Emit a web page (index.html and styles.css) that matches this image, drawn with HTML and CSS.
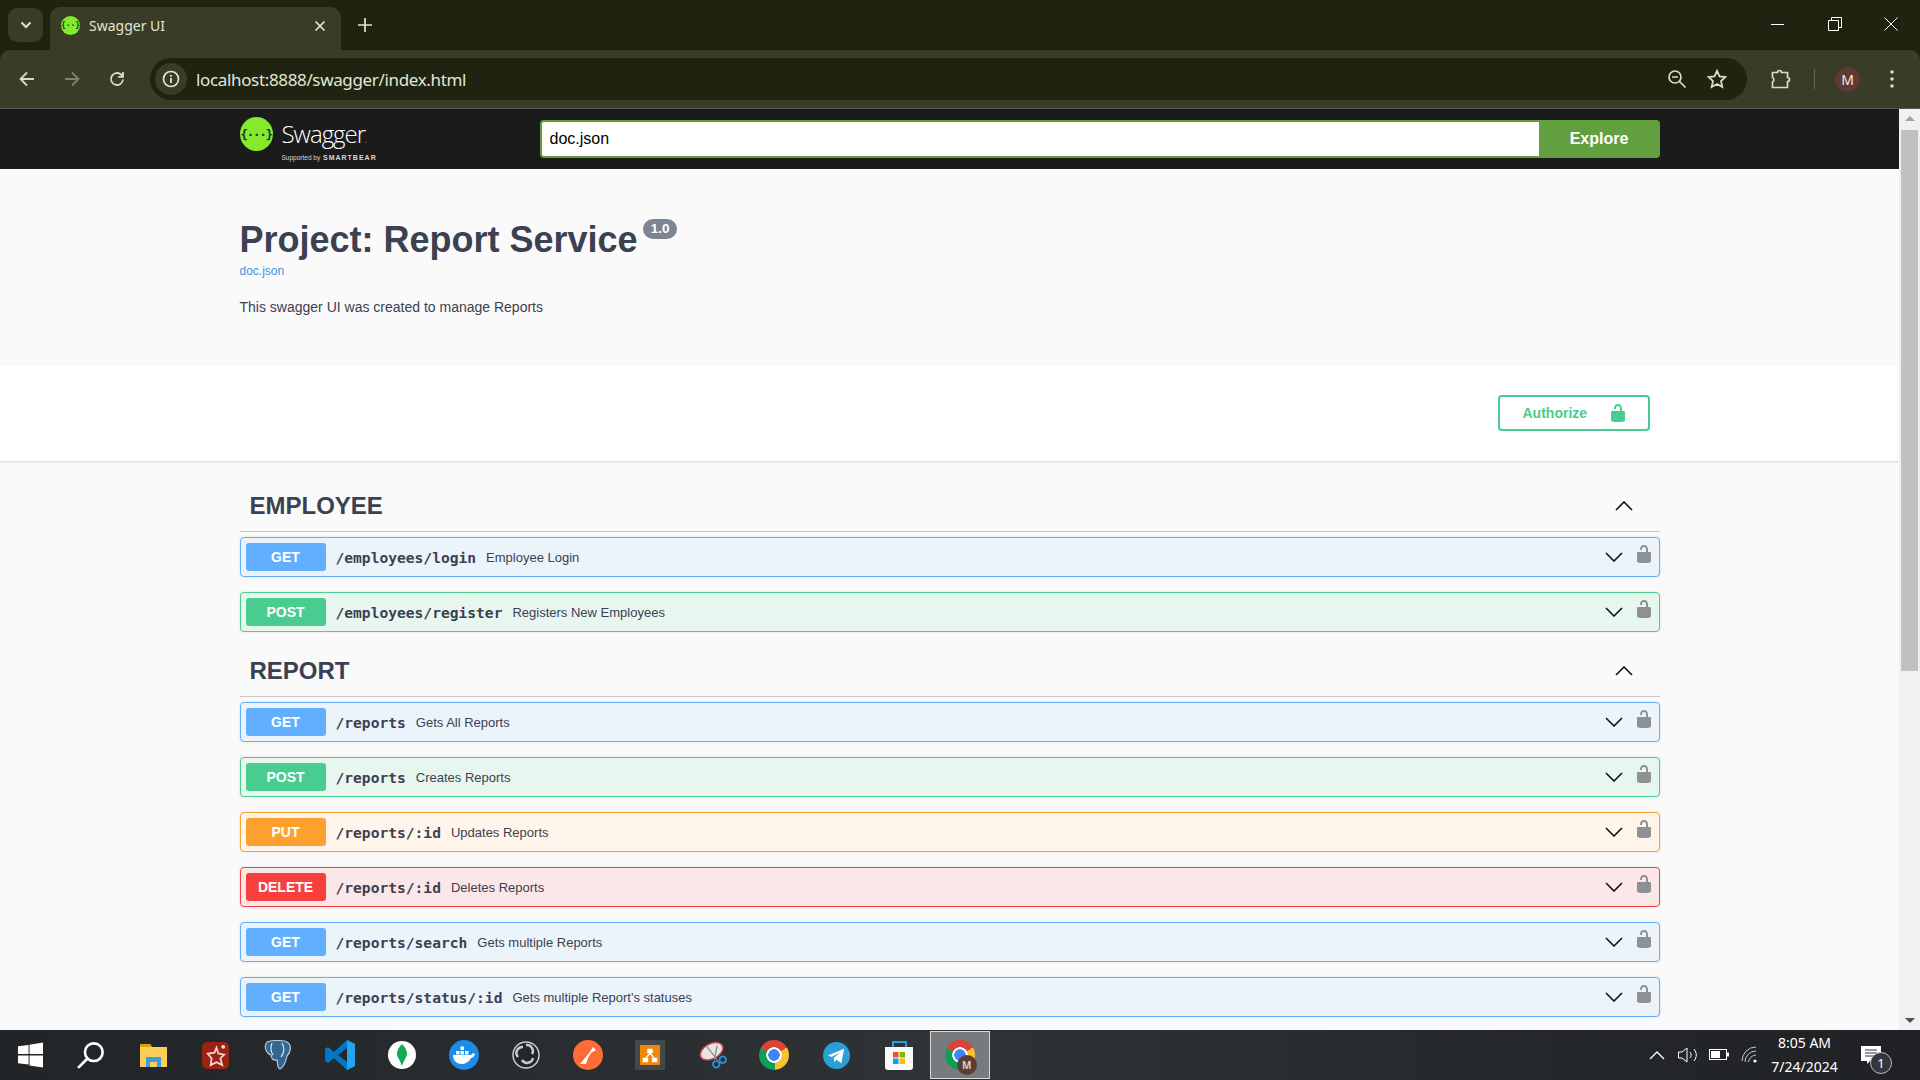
FILE: index.html
```html
<!doctype html>
<html>
<head>
    <meta charset="utf-8">
    <title>Swagger UI</title>
    <link rel="stylesheet" href="styles.css">
</head>
<body>
<svg class="defs">
    <symbol id="lock" viewBox="0 0 20 20"><path d="M15.8 8H14V5.6C14 2.703 12.665 1 10 1 7.334 1 6 2.703 6 5.6V6h2v-.801C8 3.754 8.797 3 10 3c1.203 0 2 .754 2 2.199V8H4c-.553 0-1 .646-1 1.199V17c0 .549.428 1.139.951 1.307l1.197.387C5.672 18.861 6.55 19 7.1 19h5.8c.549 0 1.428-.139 1.951-.307l1.196-.387c.524-.167.953-.757.953-1.306V9.199C17 8.646 16.352 8 15.8 8z"/></symbol>
    <symbol id="down" viewBox="0 0 18 10"><path d="M1 1l8 8 8-8" fill="none" stroke="#111" stroke-width="1.6"/></symbol>
    <symbol id="up" viewBox="0 0 18 10"><path d="M1 9l8-8 8 8" fill="none" stroke="#111" stroke-width="1.6"/></symbol>
</svg>

<div class="tabstrip">
    <div class="tabsearch"><svg width="12" height="8" viewBox="0 0 12 8"><path d="M1.5 1.5L6 6l4.500-4.500" fill="none" stroke="#dfe3cf" stroke-width="2"/></svg></div>
    <div class="tab">
        <span class="favicon">{··}</span>
        <span class="tabtitle">Swagger UI</span>
        <svg class="tabclose" width="12" height="12" viewBox="0 0 12 12"><path d="M1.500 1.500l9 9m0-9l-9 9" stroke="#e3e6d5" stroke-width="1.700"/></svg>
    </div>
    <svg class="newtab" width="14" height="14" viewBox="0 0 14 14"><path d="M7 0v14M0 7h14" stroke="#e3e6d5" stroke-width="1.700"/></svg>
    <div class="winbtns">
        <svg width="14" height="14" viewBox="0 0 14 14"><path d="M0 7.500h13" stroke="#fff"/></svg>
        <svg width="14" height="14" viewBox="0 0 14 14"><path d="M.5 3.500h10v10H.5zM3.500 3.500V.5h10v10h-3" fill="none" stroke="#fff"/></svg>
        <svg width="14" height="14" viewBox="0 0 14 14"><path d="M.5.5l13 13m0-13l-13 13" stroke="#fff"/></svg>
    </div>
</div>

<div class="toolbar">
    <svg class="navbtn" width="18" height="18" viewBox="0 0 18 18"><path d="M16 9H3m6-6.500L2.500 9 9 15.500" fill="none" stroke="#d9dcc8" stroke-width="1.800"/></svg>
    <svg class="navbtn" width="18" height="18" viewBox="0 0 18 18"><path d="M2 9h13M9 2.500L15.500 9 9 15.500" fill="none" stroke="#7f826d" stroke-width="1.800"/></svg>
    <svg class="navbtn" width="18" height="18" viewBox="0 0 18 18"><path d="M15 9.500A6 6 0 1 1 13 4.500L15 6.500M15 2v4.800h-4.800" fill="none" stroke="#d9dcc8" stroke-width="1.800"/></svg>
    <div class="omnibox">
        <span class="infochip"><svg width="18" height="18" viewBox="0 0 18 18"><circle cx="9" cy="9" r="7.500" fill="none" stroke="#e3e6d5" stroke-width="1.700"/><path d="M9 8v5M9 5v1.800" stroke="#e3e6d5" stroke-width="1.800"/></svg></span>
        <span class="url">localhost:8888/swagger/index.html</span>
        <svg class="omniicon" width="20" height="20" viewBox="0 0 20 20"><circle cx="8" cy="8" r="6" fill="none" stroke="#d9dcc8" stroke-width="1.700"/><path d="M5 8h6M12.500 12.500l6 6" stroke="#d9dcc8" stroke-width="1.700"/></svg>
        <svg class="omniicon" width="20" height="20" viewBox="0 0 20 20"><path d="M10 1.800l2.500 5.500 6 .7-4.500 4 1.300 6L10 15l-5.300 3 1.300-6-4.500-4 6-.7z" fill="none" stroke="#d9dcc8" stroke-width="1.800"/></svg>
    </div>
    <svg class="exticon" width="20" height="20" viewBox="0 0 20 20"><path d="M1.500 3.500h5a2 2 0 0 1 4 0h6v5a2 2 0 0 1 0 4v6h-15v-5.500a2.500 2.500 0 0 0 0-4.500z" fill="none" stroke="#d9dcc8" stroke-width="1.700"/></svg>
    <span class="toolsep"></span>
    <span class="avatar">M</span>
    <svg class="kebab" width="4" height="18" viewBox="0 0 4 18"><circle cx="2" cy="2" r="1.800" fill="#d9dcc8"/><circle cx="2" cy="9" r="1.800" fill="#d9dcc8"/><circle cx="2" cy="16" r="1.800" fill="#d9dcc8"/></svg>
</div>

<div class="viewport">
    <div class="page">
        <div class="topbar">
            <div class="wrap topbar-inner">
                <div class="logo">
                    <span class="logo-mark">{···}</span>
                    <div class="logo-text">
                        <span class="logo-name">Swagger<small>.</small></span>
                        <span class="logo-sub">Supported by <b>SMARTBEAR</b></span>
                    </div>
                </div>
                <form class="explore">
                    <input class="explore-input" type="text" value="doc.json">
                    <span class="explore-btn">Explore</span>
                </form>
            </div>
        </div>

        <div class="wrap info">
            <div class="title-row">
                <h2>Project: Report Service</h2>
                <span class="version">1.0</span>
            </div>
            <a class="doclink">doc.json</a>
            <p class="desc">This swagger UI was created to manage Reports</p>
        </div>

        <div class="scheme">
            <div class="wrap scheme-inner">
                <span class="authorize">Authorize<svg class="authlock" width="20" height="20"><use href="#lock"/></svg></span>
            </div>
        </div>

        <div class="wrap">
            <div class="tag tag-first"><h3>EMPLOYEE</h3><svg width="18" height="10"><use href="#up"/></svg></div>
            <div class="ops">
                <div class="op get"><span class="method">GET</span><span class="path">/employees/login</span><span class="summary">Employee Login</span><svg class="chev" width="18" height="10"><use href="#down"/></svg><svg class="oplock" width="20" height="20"><use href="#lock"/></svg></div>
                <div class="op post"><span class="method">POST</span><span class="path">/employees/register</span><span class="summary">Registers New Employees</span><svg class="chev" width="18" height="10"><use href="#down"/></svg><svg class="oplock" width="20" height="20"><use href="#lock"/></svg></div>
            </div>

            <div class="tag"><h3>REPORT</h3><svg width="18" height="10"><use href="#up"/></svg></div>
            <div class="ops">
                <div class="op get"><span class="method">GET</span><span class="path">/reports</span><span class="summary">Gets All Reports</span><svg class="chev" width="18" height="10"><use href="#down"/></svg><svg class="oplock" width="20" height="20"><use href="#lock"/></svg></div>
                <div class="op post"><span class="method">POST</span><span class="path">/reports</span><span class="summary">Creates Reports</span><svg class="chev" width="18" height="10"><use href="#down"/></svg><svg class="oplock" width="20" height="20"><use href="#lock"/></svg></div>
                <div class="op put"><span class="method">PUT</span><span class="path">/reports/:id</span><span class="summary">Updates Reports</span><svg class="chev" width="18" height="10"><use href="#down"/></svg><svg class="oplock" width="20" height="20"><use href="#lock"/></svg></div>
                <div class="op delete"><span class="method">DELETE</span><span class="path">/reports/:id</span><span class="summary">Deletes Reports</span><svg class="chev" width="18" height="10"><use href="#down"/></svg><svg class="oplock" width="20" height="20"><use href="#lock"/></svg></div>
                <div class="op get"><span class="method">GET</span><span class="path">/reports/search</span><span class="summary">Gets multiple Reports</span><svg class="chev" width="18" height="10"><use href="#down"/></svg><svg class="oplock" width="20" height="20"><use href="#lock"/></svg></div>
                <div class="op get"><span class="method">GET</span><span class="path">/reports/status/:id</span><span class="summary">Gets multiple Report's statuses</span><svg class="chev" width="18" height="10"><use href="#down"/></svg><svg class="oplock" width="20" height="20"><use href="#lock"/></svg></div>
            </div>
        </div>
    </div>

    <div class="scrollbar">
        <span class="arrow-up"></span>
        <div class="scroll-track"><span class="thumb"></span></div>
        <span class="arrow-down"></span>
    </div>
</div>

<div class="taskbar">
    <div class="task task-first"><svg width="25" height="26" viewBox="0 0 26 26"><path d="M0 4l11-1.500V12H0zM12 2.300L26 0v12H12zM0 13.500h11V23L0 21.500zM12 13.500h14V26l-14-2z" fill="#fff"/></svg></div>
    <div class="task"><svg width="28" height="28" viewBox="0 0 30 30"><circle cx="18" cy="12" r="9.500" fill="none" stroke="#fff" stroke-width="2.800"/><path d="M11 19L2 28" stroke="#fff" stroke-width="3" stroke-linecap="round"/></svg></div>
    <div class="task"><svg width="27" height="23" viewBox="0 0 27 23"><path d="M0 1a1 1 0 0 1 1-1h9l2 3h15v20H0z" fill="#f9cf55"/><path d="M0 1a1 1 0 0 1 1-1h9l2 3H0z" fill="#e0a011"/><path d="M6 23V13h15v10h-4v-5h-7v5z" fill="#3f9ce0"/></svg></div>
    <div class="task"><svg width="27" height="27" viewBox="0 0 28 28"><rect width="28" height="28" rx="5" fill="#9a2316"/><path d="M15 6l2 6 6 1-4 4 2 7-6-3-6 3 1-7-4-5 7-1z" fill="none" stroke="#f3d9d4" stroke-width="1.800"/><circle cx="22" cy="5" r="2" fill="#f3d9d4"/></svg></div>
    <div class="task"><svg width="30" height="30" viewBox="0 0 30 30"><path d="M5 2c5-2 16-2 20 0 5 3 4 10 0 14-1 5-3 11-7 13-3-1-2-5-3-9-4 1-6-2-6-5C5 14 1 7 5 2z" fill="#336791" stroke="#b9cadb" stroke-width="1.200"/><path d="M10 3C8 8 9 12 11 15M20 3c3 5 2 10-1 14" fill="none" stroke="#dfe8f0" stroke-width="1.200"/></svg></div>
    <div class="task"><svg width="30" height="30" viewBox="0 0 30 30"><path d="M22 0l8 4v22l-8 4L9 18l-6 5-3-2V9l3-2 6 5z" fill="#0078c9"/><path d="M22 0l8 4v22l-8 4z" fill="#25a5ee"/><path d="M22 8l-9 7 9 7z" fill="#25272a"/></svg></div>
    <div class="task"><svg width="28" height="28" viewBox="0 0 28 28"><circle cx="14" cy="14" r="14" fill="#fff"/><path d="M14 3c4 4 5 7 5 11-1 3-3 5-5 11-2-6-4-8-5-11 0-4 1-7 5-11z" fill="#13aa52"/></svg></div>
    <div class="task"><svg width="30" height="30" viewBox="0 0 30 30"><circle cx="15" cy="15" r="15" fill="#1d8ce8"/><path d="M4 15h18c1-2 3-2 4-1-1 3-3 4-4 4-2 4-6 6-9 6-5 0-9-3-9-9z" fill="#fff"/><path d="M7 11h3.500v3.500H7zM11.500 11H15v3.500h-3.500zM16 11h3.500v3.500H16zM11.500 6.500H15V10h-3.500z" fill="#fff"/></svg></div>
    <div class="task"><svg width="28" height="28" viewBox="0 0 28 28"><circle cx="14" cy="14" r="13" fill="#24262a" stroke="#c9cacb" stroke-width="1.500"/><path d="M14 4a6 6 0 0 1 6 9M21 17a6 6 0 0 1-11 2M6 16a6 6 0 0 1 5-10" fill="none" stroke="#c9cacb" stroke-width="2.500"/></svg></div>
    <div class="task"><svg width="30" height="30" viewBox="0 0 30 30"><circle cx="15" cy="15" r="15" fill="#ff6c37"/><path d="M7 24l10-12 3-5 3 3-5 3-3 5-2 6z" fill="#fff"/></svg></div>
    <div class="task"><span class="drawio-box"><svg width="20" height="20" viewBox="0 0 22 22"><rect width="22" height="22" rx="1" fill="#f08705"/><path d="M8 4h6v5H8zM3 14h6v5H3zM13 14h6v5h-6z" fill="#fff"/><path d="M11 9l-5 6m5-6l5 6" stroke="#fff" stroke-width="1.500"/></svg></span></div>
    <div class="task"><svg width="29" height="28" viewBox="0 0 30 30"><ellipse cx="14" cy="11" rx="13" ry="8" transform="rotate(-28 14 11)" fill="#e9e4e4" stroke="#c8494b" stroke-width="1.500"/><path d="M9 6l11 14M20 5l-3 15" stroke="#8d8f92" stroke-width="1.500"/><circle cx="19" cy="25" r="3.500" fill="none" stroke="#2b8fd6" stroke-width="2"/><circle cx="26" cy="20" r="3.500" fill="none" stroke="#2b8fd6" stroke-width="2"/></svg></div>
    <div class="task"><span class="chrome"></span></div>
    <div class="task"><svg width="27" height="27" viewBox="0 0 28 28"><circle cx="14" cy="14" r="14" fill="#2a9fd8"/><path d="M5 14l17-7-3 15-5-3.500-2 2.500-1-4.500 7-6-9 5z" fill="#fff"/></svg></div>
    <div class="task"><svg width="30" height="30" viewBox="0 0 30 30"><path d="M9 8V2h13v6" fill="none" stroke="#1ba1e2" stroke-width="2"/><path d="M1 7h28v20a3 3 0 0 1-3 3H4a3 3 0 0 1-3-3z" fill="#fafafa"/><path d="M9 12h5.500v5.500H9z" fill="#f25022"/><path d="M15.500 12H21v5.500h-5.500z" fill="#7fba00"/><path d="M9 18.500h5.500V24H9z" fill="#00a4ef"/><path d="M15.500 18.500H21V24h-5.500z" fill="#ffb900"/></svg></div>
    <div class="task task-active"><span class="chrome"><span class="chrome-badge">M</span></span></div>
    <div class="tray">
        <svg width="16" height="10" viewBox="0 0 16 10"><path d="M1 9l7-7 7 7" fill="none" stroke="#fff" stroke-width="1.300"/></svg>
        <svg class="tray-sound" width="20" height="18" viewBox="0 0 20 18"><path d="M.5 6H4l5-4v14l-5-4H.5zM12 6c1.500 2 1.500 4 0 6M16 3c3 4 3 8 0 12" fill="none" stroke="#fff"/></svg>
        <svg class="tray-batt" width="20" height="12" viewBox="0 0 20 12"><rect x=".5" y=".5" width="17" height="10" fill="none" stroke="#fff"/><rect x="2" y="2" width="9" height="7" fill="#fff"/><rect x="18" y="3.500" width="2" height="4" fill="#fff"/></svg>
        <svg class="tray-wifi" width="18" height="18" viewBox="0 0 18 18"><path d="M1 15a14 14 0 0 1 14-14M4 16a11 11 0 0 1 11-11M7.500 16A8 8 0 0 1 15 9" fill="none" stroke="#c9cacb"/><circle cx="14" cy="15" r="1.600" fill="#fff"/></svg>
        <div class="clock"><span>8:05 AM</span><span>7/24/2024</span></div>
        <div class="notif">
            <svg width="20" height="18" viewBox="0 0 20 18"><path d="M0 0h20v15H9l-3 3v-3H0z" fill="#fff"/><path d="M4 4h12M4 7h12M4 10h12" stroke="#33373b"/></svg>
            <span class="notif-count">1</span>
        </div>
    </div>
</div>
</body>
</html>
```

FILE: styles.css
```css
html, body {
    height: 100%;
    margin: 0;
    overflow: hidden;
}
body {
    display: flex;
    flex-direction: column;
    height: 1080px;
    background: #1f2310;
    font-family: "Liberation Sans", Arial, sans-serif;
    color: #3b4151;
}
.defs {
    width: 0;
    height: 0;
    position: absolute;
}

/* browser chrome */
.tabstrip {
    height: 50px;
    flex: none;
    display: flex;
    background: #1f2310;
    box-sizing: border-box;
    padding: 7px 0 0 8px;
}
.tabsearch {
    width: 35px;
    height: 34px;
    margin-top: 1px;
    background: #393c27;
    border-radius: 9px;
    display: flex;
    align-items: center;
    justify-content: center;
}
.tab {
    width: 291px;
    height: 43px;
    margin-left: 7px;
    background: #393c27;
    border-radius: 10px 10px 0 0;
    display: flex;
    align-items: center;
    box-sizing: border-box;
    padding: 0 15px 6px 11px;
    font-family: "Noto Sans", sans-serif;
}
.favicon {
    width: 19px;
    height: 19px;
    border-radius: 50%;
    background: #85ea2d;
    color: #173647;
    font: bold 8px "DejaVu Sans Mono", monospace;
    display: flex;
    align-items: center;
    justify-content: center;
}
.tabtitle {
    margin-left: 9px;
    flex: 1;
    font-size: 14px;
    color: #e3e6d5;
}
.newtab {
    margin: 11px 0 0 17px;
}
.winbtns {
    margin-left: auto;
    display: flex;
    gap: 42.500px;
    padding: 10px 22px 0 0;
}
.toolbar {
    height: 59px;
    flex: none;
    background: #393c27;
    border-bottom: 1px solid #55584a;
    border-radius: 10px 10px 0 0;
    box-sizing: border-box;
    display: flex;
    align-items: center;
    padding-left: 18px;
}
.navbtn {
    margin-right: 27px;
}
.omnibox {
    width: 1597px;
    height: 42px;
    margin-left: -3px;
    background: #1f2310;
    border-radius: 21px;
    display: flex;
    align-items: center;
    box-sizing: border-box;
    padding: 0 20px 0 5px;
    gap: 20px;
}
.infochip {
    width: 32px;
    height: 32px;
    border-radius: 50%;
    background: #393c27;
    display: flex;
    align-items: center;
    justify-content: center;
}
.url {
    flex: 1;
    margin-left: -11px;
    font: 17px "Noto Sans", sans-serif;
    letter-spacing: -0.350px;
    color: #e3e6d5;
}
.exticon {
    margin-left: 24px;
}
.toolsep {
    width: 1px;
    height: 20px;
    background: #66695a;
    margin-left: 23px;
}
.avatar {
    width: 25px;
    height: 25px;
    border-radius: 50%;
    margin-left: 20px;
    background: #5f3a35;
    color: #f0e6e2;
    font: 14px "Noto Sans", sans-serif;
    display: flex;
    align-items: center;
    justify-content: center;
}
.kebab {
    margin-left: 30px;
}

/* page and scrollbar */
.viewport {
    height: 921px;
    flex: none;
    display: flex;
    overflow: hidden;
}
.page {
    flex: 1;
    background: #fafafa;
    overflow: hidden;
}
.wrap {
    width: 1420px;
    margin: 0 auto;
}
.scrollbar {
    width: 21px;
    flex: none;
    background: #f1f1f1;
    display: flex;
    flex-direction: column;
    align-items: center;
}
.arrow-up, .arrow-down {
    width: 0;
    height: 0;
    border-left: 5px solid transparent;
    border-right: 5px solid transparent;
    margin: 7px 0;
}
.arrow-up {
    border-bottom: 5px solid #a3a3a3;
}
.arrow-down {
    border-top: 5px solid #505050;
}
.scroll-track {
    flex: 1;
    width: 17px;
    padding-top: 2px;
}
.thumb {
    display: block;
    height: 541px;
    background: #c1c1c1;
}

/* swagger top bar */
.topbar {
    height: 60px;
    background: #1b1b1b;
}
.topbar-inner {
    height: 100%;
    display: flex;
    align-items: center;
}
.logo {
    width: 300px;
    display: flex;
    gap: 9px;
    color: #fff;
}
.logo-mark {
    width: 33px;
    height: 34px;
    margin-top: 1px;
    border-radius: 50%;
    background: #85ea2d;
    color: #173647;
    font: bold 13px "DejaVu Sans Mono", monospace;
    letter-spacing: -1.500px;
    display: flex;
    align-items: center;
    justify-content: center;
}
.logo-text {
    display: flex;
    flex-direction: column;
    padding-top: 4px;
}
.logo-name {
    font: 300 24px/27px "Open Sans", sans-serif;
    letter-spacing: -1px;
}
.logo-name small {
    font-size: 8px;
}
.logo-sub {
    font: 6.500px/9px "Liberation Sans", sans-serif;
    color: #d6d6d6;
}
.logo-sub b {
    font-size: 7px;
    letter-spacing: 1px;
    margin-left: 1px;
}
.explore {
    flex: 1;
    display: flex;
    height: 38px;
}
.explore-input {
    flex: 1;
    min-width: 0;
    box-sizing: border-box;
    height: 100%;
    border: 2px solid #62a03f;
    border-right: none;
    border-radius: 4px 0 0 4px;
    padding: 0 8px;
    font: 16px "Liberation Sans", sans-serif;
    color: #000;
    background: #fff;
}
.explore-btn {
    width: 121px;
    background: #62a03f;
    border-radius: 0 4px 4px 0;
    color: #fff;
    font-size: 16px;
    font-weight: bold;
    display: flex;
    align-items: center;
    justify-content: center;
}

/* info block */
.info {
    height: 196px;
    box-sizing: border-box;
    padding-top: 50px;
}
.title-row {
    display: flex;
    align-items: flex-start;
}
h2 {
    margin: 0;
    font-size: 36px;
    line-height: 42px;
    font-weight: bold;
    color: #3b4151;
}
.version {
    margin-left: 5px;
    padding: 0 8px;
    height: 20px;
    line-height: 20px;
    border-radius: 57px;
    background: #7d8492;
    color: #fff;
    font-size: 13.500px;
    font-weight: bold;
}
.doclink {
    display: block;
    margin-top: 3px;
    font-size: 12px;
    line-height: 14px;
    color: #4990e2;
}
.desc {
    margin: 21px 0 0;
    font-size: 14px;
    line-height: 16px;
}

/* authorize bar */
.scheme {
    height: 96px;
    background: #fff;
    box-shadow: 0 1px 2px 0 rgba(0, 0, 0, .15);
}
.scheme-inner {
    height: 100%;
    display: flex;
    justify-content: flex-end;
    align-items: center;
    box-sizing: border-box;
    padding-right: 10px;
}
.authorize {
    width: 152px;
    height: 36px;
    box-sizing: border-box;
    border: 2px solid #49cc90;
    border-radius: 4px;
    color: #49cc90;
    font-size: 14px;
    font-weight: bold;
    display: flex;
    align-items: center;
    padding-left: 23px;
}
.authlock {
    margin-left: 21px;
    fill: #49cc90;
}

/* operations */
.tag {
    height: 52px;
    box-sizing: border-box;
    margin-top: 13px;
    padding: 0 27px 0 10px;
    border-bottom: 1px solid #c6c7c9;
    display: flex;
    align-items: center;
    justify-content: space-between;
}
.tag-first {
    margin-top: 19px;
}
h3 {
    margin: 0;
    font-size: 24px;
    font-weight: bold;
    color: #3b4151;
}
.ops {
    margin-top: 5px;
    display: flex;
    flex-direction: column;
    gap: 15px;
}
.op {
    height: 40px;
    box-sizing: border-box;
    border: 1px solid;
    border-radius: 4px;
    padding: 5px 5px 5px 5px;
    display: flex;
    align-items: center;
    box-shadow: 0 0 3px rgba(0, 0, 0, .12);
}
.method {
    width: 80px;
    height: 28px;
    border-radius: 3px;
    color: #fff;
    font-size: 14px;
    font-weight: bold;
    display: flex;
    align-items: center;
    justify-content: center;
}
.path {
    margin-left: 10px;
    font: bold 14.600px "DejaVu Sans Mono", monospace;
    color: #3b4151;
}
.summary {
    flex: 1;
    margin-left: 10px;
    font-size: 13px;
    color: #3b4151;
}
.chev {
    margin-right: 11px;
}
.oplock {
    margin-top: -6px;
    fill: #8e9194;
}
.get { background: #ebf3fb; border-color: #61affe; }
.get .method { background: #61affe; }
.post { background: #e8f6f0; border-color: #49cc90; }
.post .method { background: #49cc90; }
.put { background: #fff5ea; border-color: #fca130; }
.put .method { background: #fca130; }
.delete { background: #fbe7e7; border-color: #f93e3e; }
.delete .method { background: #f93e3e; }

/* windows taskbar */
.taskbar {
    height: 50px;
    flex: none;
    background: linear-gradient(90deg, #222528, #2f3336 50%, #1f2124);
    display: flex;
    align-items: center;
}
.task {
    width: 62.140px;
    height: 50px;
    flex: none;
    display: flex;
    align-items: center;
    justify-content: center;
}
.task-first {
    width: 60px;
}
.task-active {
    box-sizing: border-box;
    height: 48px;
    width: 60px;
    background: #777b7d;
    border: 1px solid #d9dadb;
}
.drawio-box {
    padding: 5px;
    background: #45484b;
    display: flex;
}
.chrome {
    position: relative;
    width: 30px;
    height: 30px;
    border-radius: 50%;
    background:
        radial-gradient(circle, #4285f4 0 5.500px, #fff 6px 7.500px, transparent 8px),
        conic-gradient(from -62deg, #db4437 0 122deg, #fbc02d 122deg 238deg, #0f9d58 238deg 360deg);
}
.chrome-badge {
    position: absolute;
    right: -2px;
    bottom: -5px;
    width: 20px;
    height: 20px;
    border-radius: 50%;
    background: #5a3d35;
    color: #d9cfc9;
    font: bold 10px "Noto Sans", sans-serif;
    display: flex;
    align-items: center;
    justify-content: center;
}
.tray {
    margin-left: auto;
    display: flex;
    align-items: center;
    color: #fff;
}
.tray-sound {
    margin-left: 13px;
}
.tray-batt {
    margin-left: 11px;
}
.tray-wifi {
    margin-left: 12px;
}
.clock {
    width: 90px;
    margin-left: 1px;
    display: flex;
    flex-direction: column;
    align-items: center;
    font: 14px/24px "Noto Sans", sans-serif;
}
.notif {
    position: relative;
    margin: 0 27px 0 11.500px;
    width: 32px;
    display: flex;
}
.notif-count {
    position: absolute;
    left: 9px;
    top: 6px;
    width: 20px;
    height: 20px;
    border: 1px solid #bbb;
    border-radius: 50%;
    background: #33373b;
    font: 13px/20px "Noto Sans", sans-serif;
    text-align: center;
}
```
